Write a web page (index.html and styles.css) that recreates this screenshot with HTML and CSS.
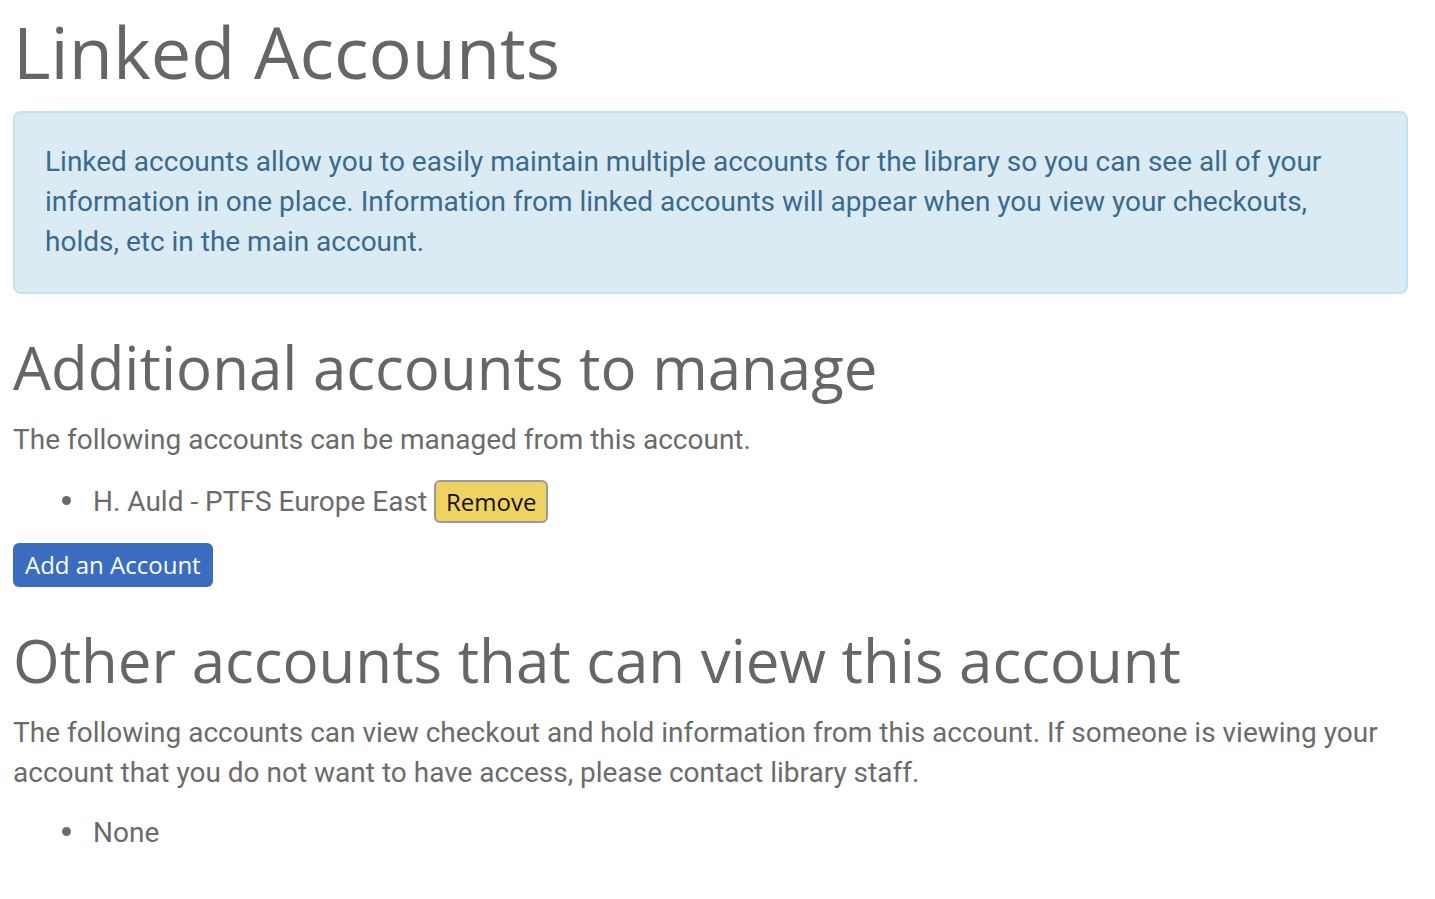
FILE: index.html
```html
<!DOCTYPE html>
<html lang="en">
<head>
<meta charset="utf-8">
<title>Linked Accounts</title>
<link rel="stylesheet" href="styles.css">
</head>
<body>
<main class="page">
  <h1 class="page-title">Linked Accounts</h1>
  <div class="alert-info">
    Linked accounts allow you to easily maintain multiple accounts for the library so you can see all of your information in one place. Information from linked accounts will appear when you view your checkouts, holds, etc in the main account.
  </div>

  <h2 class="section-title">Additional accounts to manage</h2>
  <p class="text">The following accounts can be managed from this account.</p>
  <ul class="account-list">
    <li>H. Auld - PTFS Europe East <button class="btn btn-warning" type="button">Remove</button></li>
  </ul>
  <div class="actions">
    <button class="btn btn-primary" type="button">Add an Account</button>
  </div>

  <h2 class="section-title">Other accounts that can view this account</h2>
  <p class="text">The following accounts can view checkout and hold information from this account. If someone is viewing your account that you do not want to have access, please contact library staff.</p>
  <ul class="account-list">
    <li>None</li>
  </ul>
</main>
</body>
</html>
```

FILE: styles.css
```css
html, body {
  margin: 0;
  padding: 0;
  background: #ffffff;
}

body {
  font-family: Roboto, "Liberation Sans", sans-serif;
  font-size: 28px;
  line-height: 40px;
  color: #6b6b6b;
}

.page {
  padding: 12px 27px 0 13px;
}

.page-title,
.section-title {
  font-family: "Open Sans", "Liberation Sans", sans-serif;
  font-weight: 400;
  color: #666666;
  line-height: 1.1;
}

.page-title {
  font-size: 72px;
  margin: 0 0 20px;
}

.section-title {
  font-size: 60px;
  margin: 40px 0 20px;
}

.alert-info {
  background: #dbebf4;
  border: 2px solid #c0e3ee;
  border-radius: 8px;
  color: #3a6a8e;
  padding: 29px 30px 30px;
  margin-bottom: 40px;
}

.text {
  margin: 0 0 20px;
}

.account-list {
  margin: 0 0 20px;
  padding-left: 80px;
  list-style: none;
}

.account-list li::before {
  content: "";
  display: inline-block;
  width: 9px;
  height: 9px;
  border-radius: 50%;
  background: #6b6b6b;
  margin-left: -31px;
  margin-right: 22px;
  vertical-align: 6px;
}

.btn {
  font-family: "Open Sans", "Liberation Sans", sans-serif;
  font-size: 24px;
  display: inline-block;
  cursor: pointer;
}

.btn-warning {
  background: #efd25f;
  color: #111111;
  border: 2px solid #9a9a9a;
  border-radius: 6px;
  line-height: 35px;
  padding: 2px 10px;
}

.btn-primary {
  background: #3a6dbf;
  color: #ffffff;
  border: none;
  border-radius: 6px;
  line-height: 34px;
  padding: 5px 12px;
}

.actions {
  margin: 4px 0 0;
}
```
